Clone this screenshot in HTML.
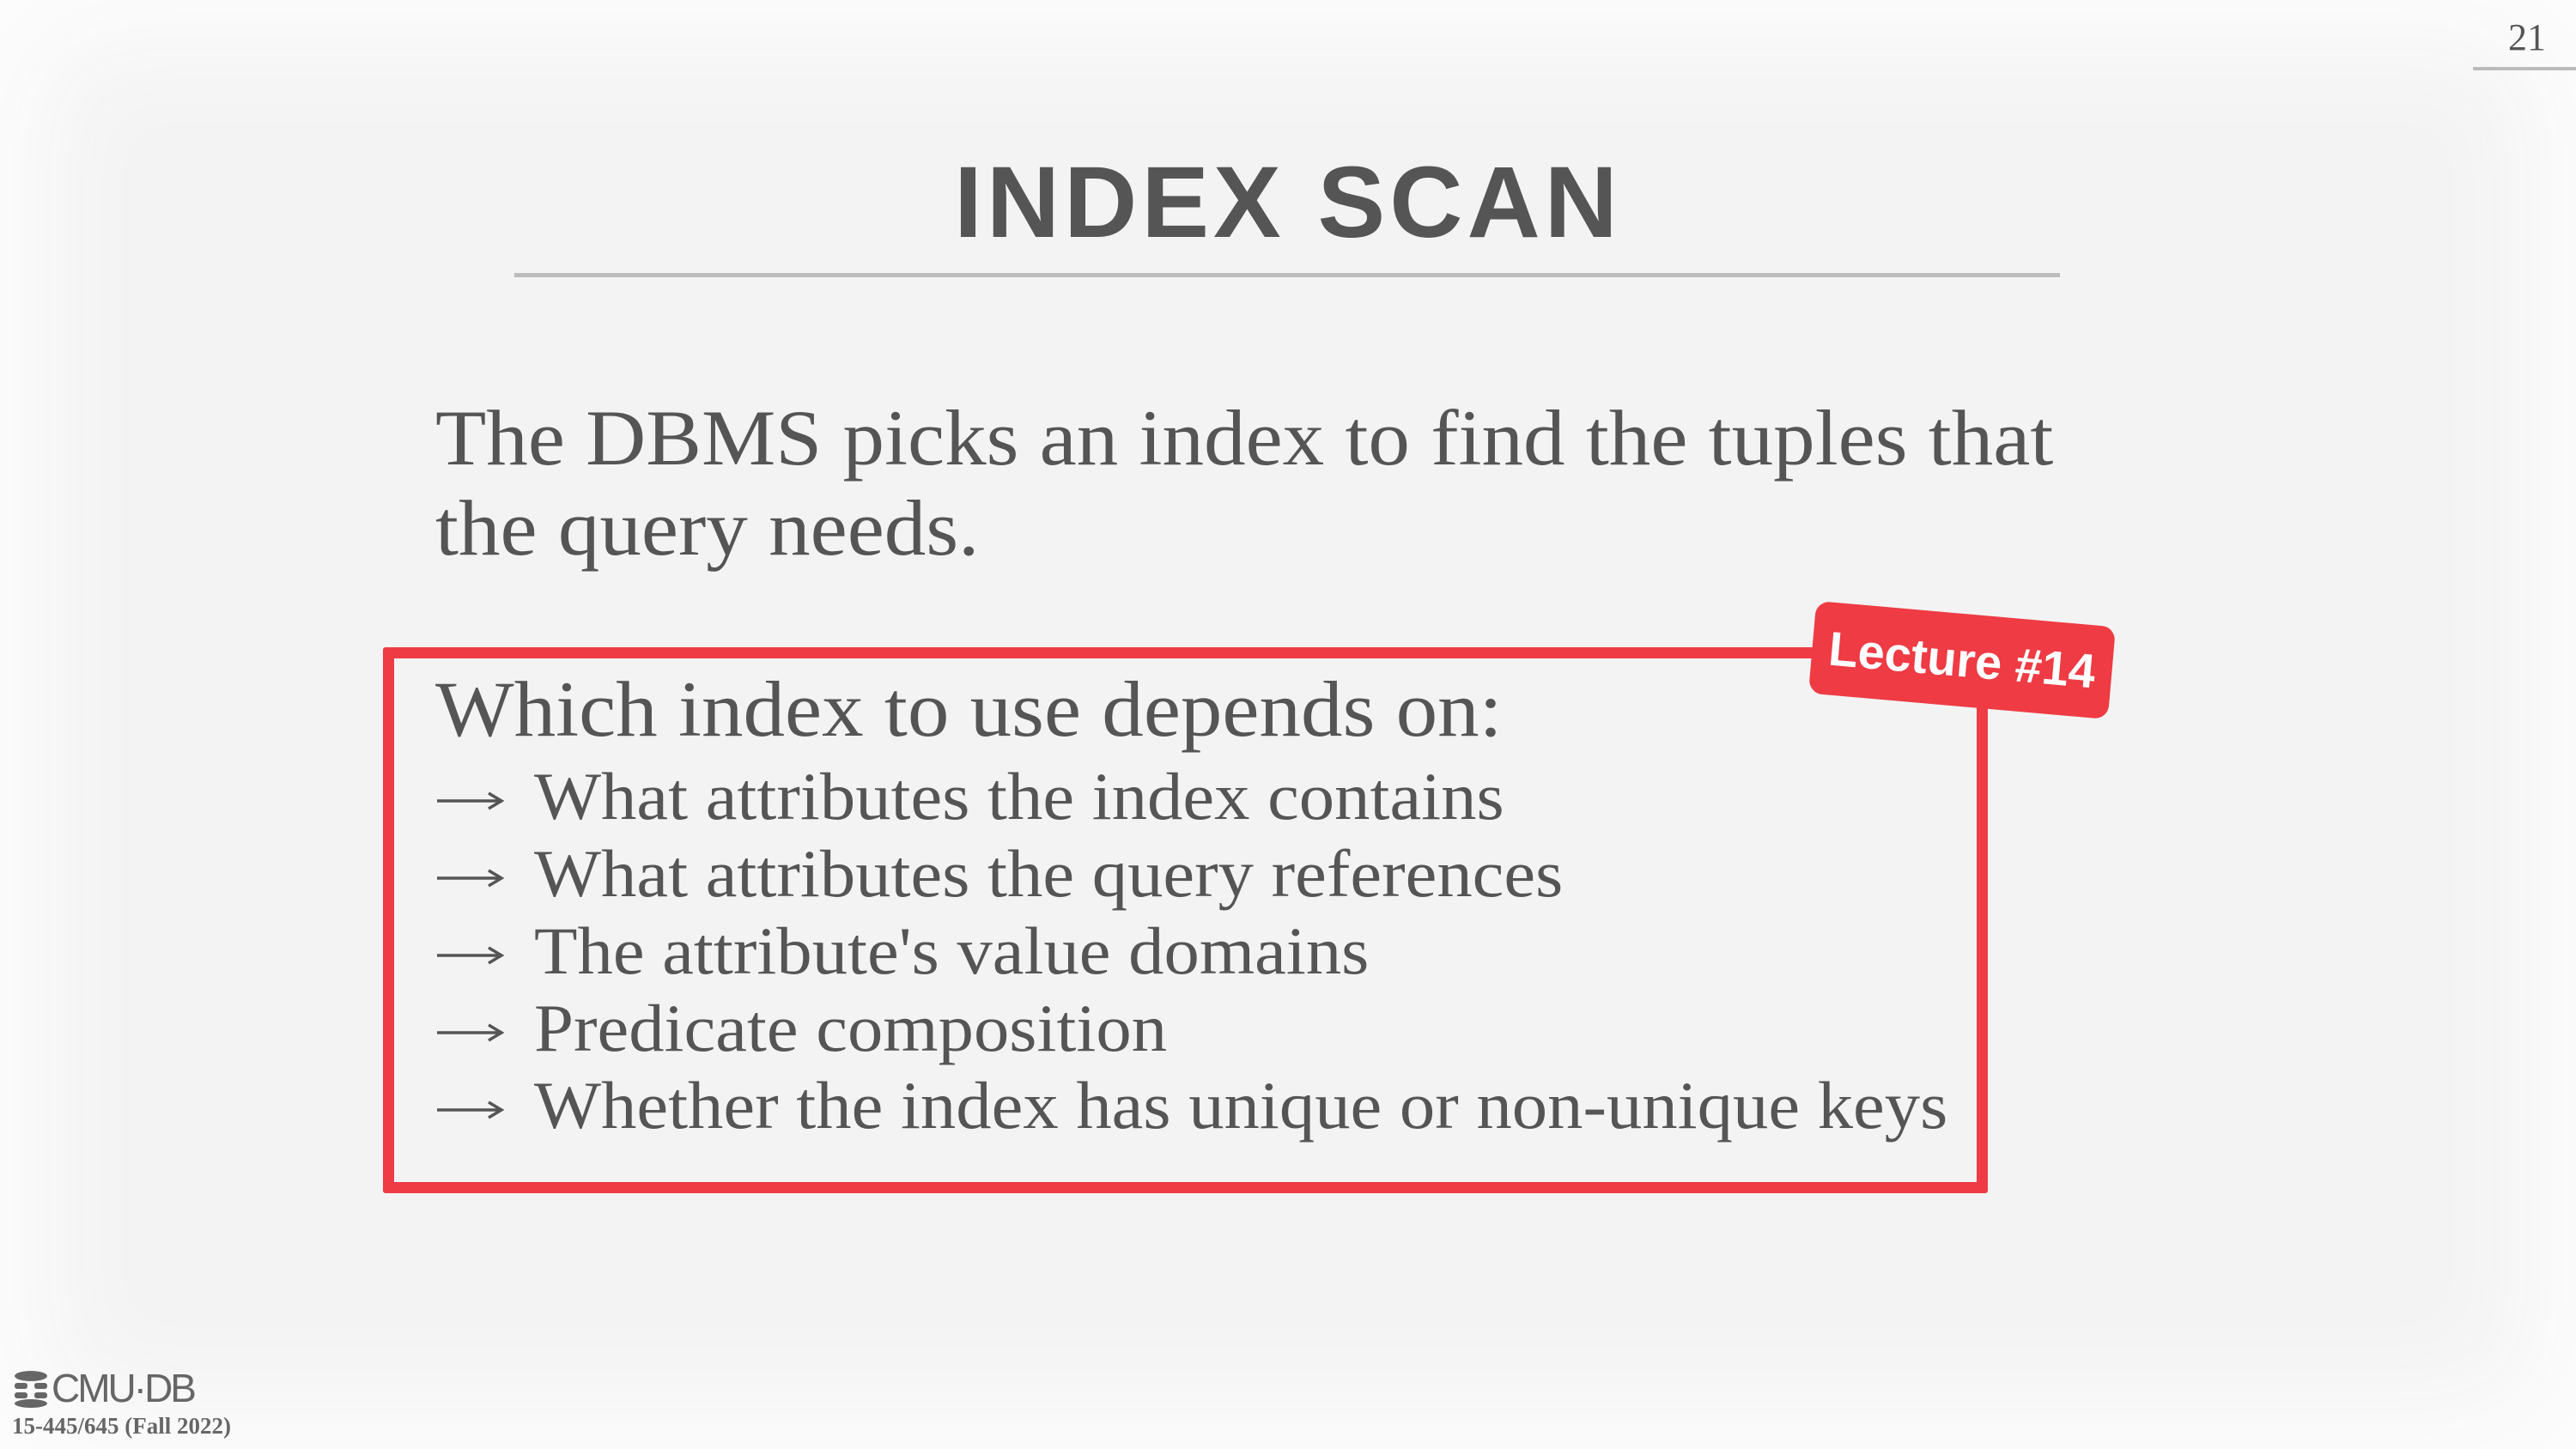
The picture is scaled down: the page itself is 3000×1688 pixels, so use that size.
<!DOCTYPE html>
<html><head><meta charset="utf-8"><style>
html,body{margin:0;padding:0}
body{width:3000px;height:1688px;position:relative;overflow:hidden;background:#f3f3f3;font-family:"Liberation Serif",serif;color:#555}
.vig{position:absolute;inset:0;box-shadow:inset 0 0 120px 60px #fcfcfc}
.t{position:absolute;white-space:nowrap;transform-origin:0 0}
#title{left:0;width:3000px;top:168px;text-align:center;font-family:"Liberation Sans",sans-serif;font-weight:bold;font-size:118px;letter-spacing:5px;color:#555}
#ul{position:absolute;left:599px;top:318px;width:1800px;height:5px;background:#bcbcbc}
.body{font-size:92px;transform:scaleX(1.055)}
.b{font-size:78px;transform:scaleX(1.06)}
#box{position:absolute;left:446px;top:754px;width:1843px;height:610px;border:13px solid #ee3b44;border-radius:3px}
#lab{position:absolute;left:2110px;top:715px;width:350px;height:108px;background:#ee3b44;border-radius:16px;transform:rotate(5deg);color:#fff;font-family:"Liberation Sans",sans-serif;font-weight:bold;font-size:56px;line-height:108px;text-align:center}
.ar{position:absolute;left:507px}
</style></head><body>
<div class="vig"></div>
<div class="t" style="right:35px;top:18px;font-size:44px;color:#555">21</div>
<div style="position:absolute;left:2880px;top:78px;width:120px;height:4px;background:#bbb"></div>
<div class="t" id="title">INDEX SCAN</div>
<div id="ul"></div>
<div class="t body" style="left:507px;top:457px">The DBMS picks an index to find the tuples that</div>
<div class="t body" style="left:507px;top:562px">the query needs.</div>
<div id="box"></div>
<div id="lab">Lecture #14</div>
<div class="t body" style="left:507px;top:773px">Which index to use depends on:</div>
<svg class="ar" style="top:918px" width="80" height="30" viewBox="0 0 80 30"><path d="M2 15H76M62 6L77 15L62 24" stroke="#555" stroke-width="3.5" fill="none"/></svg>
<svg class="ar" style="top:1008px" width="80" height="30" viewBox="0 0 80 30"><path d="M2 15H76M62 6L77 15L62 24" stroke="#555" stroke-width="3.5" fill="none"/></svg>
<svg class="ar" style="top:1098px" width="80" height="30" viewBox="0 0 80 30"><path d="M2 15H76M62 6L77 15L62 24" stroke="#555" stroke-width="3.5" fill="none"/></svg>
<svg class="ar" style="top:1188px" width="80" height="30" viewBox="0 0 80 30"><path d="M2 15H76M62 6L77 15L62 24" stroke="#555" stroke-width="3.5" fill="none"/></svg>
<svg class="ar" style="top:1278px" width="80" height="30" viewBox="0 0 80 30"><path d="M2 15H76M62 6L77 15L62 24" stroke="#555" stroke-width="3.5" fill="none"/></svg>
<div class="t b" style="left:622px;top:883px">What attributes the index contains</div>
<div class="t b" style="left:622px;top:973px">What attributes the query references</div>
<div class="t b" style="left:622px;top:1063px">The attribute's value domains</div>
<div class="t b" style="left:622px;top:1153px">Predicate composition</div>
<div class="t b" style="left:622px;top:1243px">Whether the index has unique or non-unique keys</div>
<svg style="position:absolute;left:14px;top:1596px" width="44" height="44" viewBox="0 0 44 44" fill="#666">
<ellipse cx="22" cy="7" rx="19" ry="6"/><rect x="3" y="15" width="15" height="7" rx="3"/><rect x="26" y="15" width="15" height="7" rx="3"/><rect x="3" y="26" width="15" height="7" rx="3"/><rect x="26" y="26" width="15" height="7" rx="3"/><ellipse cx="22" cy="39" rx="19" ry="5"/></svg>
<div class="t" style="left:60px;top:1590px;font-family:'Liberation Sans',sans-serif;font-size:46px;color:#666;letter-spacing:-3px">CMU·DB</div>
<div class="t" style="left:14px;top:1646px;font-size:27px;font-weight:bold;color:#666">15-445/645 (Fall 2022)</div>
</body></html>
